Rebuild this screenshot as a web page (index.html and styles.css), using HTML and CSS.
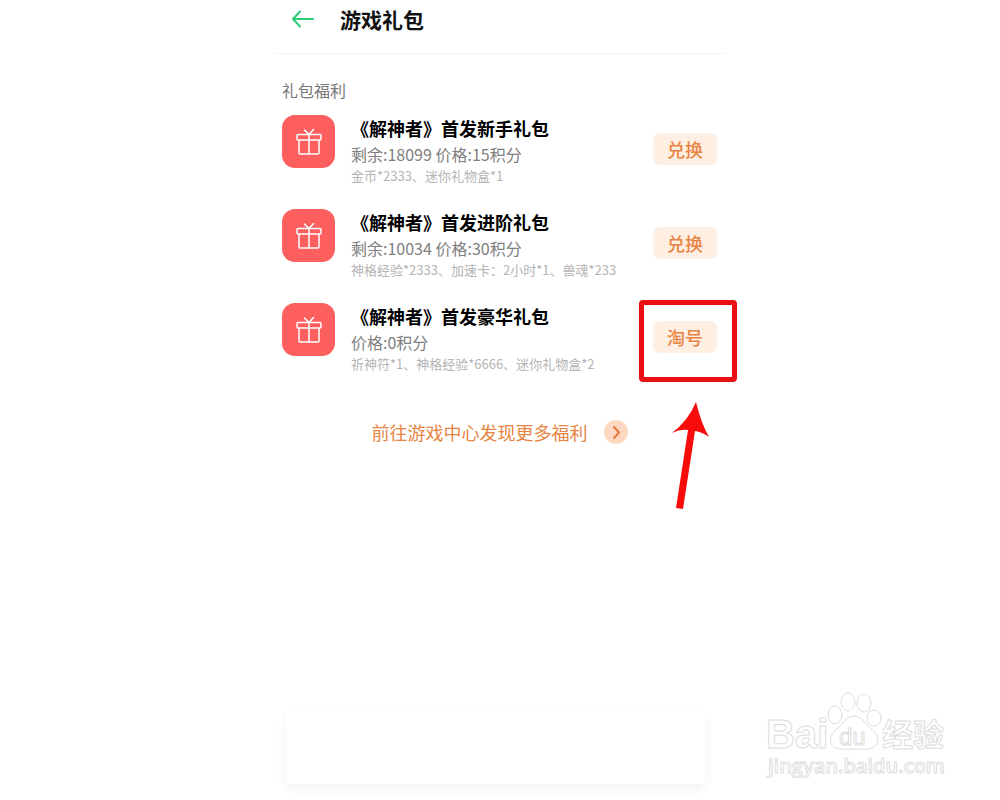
FILE: index.html
```html
<!DOCTYPE html>
<html lang="zh-CN">
<head>
    <meta charset="UTF-8">
    <meta name="viewport" content="width=device-width, initial-scale=1.0">
    <title>游戏礼包</title>
    <link rel="stylesheet" href="styles.css">
</head>
<body>
    <svg class="defs" width="0" height="0" aria-hidden="true">
        <symbol id="gift" viewBox="0 0 28 28">
            <path d="M3 6.500h22q1 0 1 1v3.500q0 1-1 1h-22q-1 0-1-1v-3.500q0-1 1-1zM4 12v13q0 1 1 1h18q1 0 1-1v-13M14 6.500v19.500M14 6.500L9.500 2M14 6.500L18.500 1.500"/>
        </symbol>
    </svg>
    <div class="container">
        <header class="header">
            <button class="back" aria-label="返回">
                <svg width="24" height="20" viewBox="0 0 24 20"><path d="M23 10H3M10 2.500L3 10l7 7.500"/></svg>
            </button>
            <h1>游戏礼包</h1>
        </header>
        <main class="content">
            <h2>礼包福利</h2>
            <ul class="gift_list">
                <li class="gift">
                    <span class="gift_icon"><svg width="28" height="28"><use href="#gift"/></svg></span>
                    <div class="info">
                        <h3>《解神者》首发新手礼包</h3>
                        <p class="price">剩余:18099 价格:15积分</p>
                        <p class="detail">金币*2333、迷你礼物盒*1</p>
                    </div>
                    <button class="btn">兑换</button>
                </li>
                <li class="gift">
                    <span class="gift_icon"><svg width="28" height="28"><use href="#gift"/></svg></span>
                    <div class="info">
                        <h3>《解神者》首发进阶礼包</h3>
                        <p class="price">剩余:10034 价格:30积分</p>
                        <p class="detail">神格经验*2333、加速卡：2小时*1、兽魂*233</p>
                    </div>
                    <button class="btn">兑换</button>
                </li>
                <li class="gift">
                    <span class="gift_icon"><svg width="28" height="28"><use href="#gift"/></svg></span>
                    <div class="info">
                        <h3>《解神者》首发豪华礼包</h3>
                        <p class="price">价格:0积分</p>
                        <p class="detail">祈神符*1、神格经验*6666、迷你礼物盒*2</p>
                    </div>
                    <div class="marked">
                        <button class="btn">淘号</button>
                        <span class="mark_box"></span>
                        <svg class="mark_arrow" width="38" height="108" viewBox="0 0 38 108"><path d="M24 0Q29 21 37 35Q30 30 23 29L11 107L4 106L16 28Q8 27 0 31Q16 19 24 0z"/></svg>
                    </div>
                </li>
            </ul>
            <a class="more" href="#">前往游戏中心发现更多福利
                <svg width="24" height="24" viewBox="0 0 24 24"><circle cx="12" cy="12" r="12"/><path d="M10 7l5 5.500l-5 5.500"/></svg>
            </a>
        </main>
        <div class="bottom_bar"></div>
    </div>
    <!-- 水印 -->
    <div class="watermark">
        <svg width="184" height="88" viewBox="0 0 184 88">
            <text class="brand" x="0" y="58">Bai</text>
            <path d="M88 26c-8 0-11 8-16 12c-6 5-9 9-7 15c3 8 12 6 23 6s20 2 23-6c2-6-1-10-7-15c-5-4-8-12-16-12z"/>
            <ellipse cx="69" cy="25" rx="7" ry="9"/>
            <ellipse cx="82" cy="12" rx="7" ry="9"/>
            <ellipse cx="98" cy="13" rx="7" ry="9"/>
            <ellipse cx="108" cy="28" rx="7" ry="8"/>
            <text class="du" x="73" y="55">du</text>
            <text class="name" x="116" y="56">经验</text>
            <text class="site" x="2" y="83">jingyan.baidu.com</text>
        </svg>
    </div>
</body>
</html>
```
FILE: styles.css
```css
* { box-sizing: border-box; }
body { margin: 0; background: #fff; font-family: "Noto Sans CJK SC", sans-serif; }
h1, h2, h3, p, ul { margin: 0; padding: 0; }
button { font-family: inherit; border: none; padding: 0; cursor: pointer; }
svg { display: block; fill: none; stroke-linecap: round; stroke-linejoin: round; }
.defs { position: absolute; }

.container { display: flex; flex-direction: column; max-width: 448px; min-height: 100vh; margin: 0 auto; padding-bottom: 16px; }
.header { display: flex; align-items: center; gap: 26px; padding: 0 14px 15px; border-bottom: 1px solid #f3f3f3; }
.header h1 { font-size: 21px; line-height: 38px; font-weight: 700; color: #111; }
.back { background: none; }
.back svg { stroke: #2fcb78; stroke-width: 2; }

.content { padding: 24px 7px 0 6px; }
.content h2 { font-size: 16px; line-height: 24px; font-weight: 400; color: #777; }
.gift_list { list-style: none; display: flex; flex-direction: column; gap: 25px; padding-top: 13px; }
.gift { display: flex; gap: 16px; align-items: flex-start; }
.gift_icon { display: flex; justify-content: center; align-items: center; width: 53px; height: 53px; border-radius: 13px; background: #fd5f5f; }
.gift_icon svg { stroke: #fff; stroke-width: 1.5; }
.info { flex: 1; }
.info h3 { font-size: 18px; line-height: 27px; font-weight: 700; color: #000; }
.price { font-size: 16px; line-height: 25px; color: #808080; }
.detail { font-size: 13px; line-height: 17px; color: #b4b4b4; }
.btn { width: 64px; height: 32px; margin-top: 18px; border-radius: 7px; background: #ffeee2; color: #e88443; font-size: 18px; line-height: 30px; font-weight: 500; }

/* 红框和箭头 */
.marked { position: relative; }
.mark_box { position: absolute; top: -3px; left: -14px; width: 98px; height: 82px; border: 5px solid #e90f15; border-radius: 4px; pointer-events: none; }
.mark_arrow { position: absolute; top: 99px; left: 19px; fill: #f80b0b; }

.more { display: flex; justify-content: center; align-items: center; gap: 16px; margin-top: 46px; font-size: 18px; line-height: 28px; color: #e88443; text-decoration: none; }
.more circle { fill: #fcd8c2; }
.more path { stroke: #e87840; stroke-width: 2; }

.bottom_bar { height: 74px; margin: auto 19px 0 10px; border-radius: 4px; background: #fff; box-shadow: 0 5px 12px rgba(0, 0, 0, .05); }

.watermark { position: absolute; right: 50px; top: 690px; pointer-events: none; }
.watermark svg { fill: #fff; stroke: #ddd; stroke-width: 1; }
.watermark text { font-family: "Liberation Sans", "Noto Sans CJK SC", sans-serif; }
.watermark .brand { font-size: 40px; font-weight: 700; }
.watermark .du { font-size: 24px; }
.watermark .name { font-family: "Noto Sans CJK SC", sans-serif; font-size: 31px; font-weight: 700; }
.watermark .site { font-family: "Open Sans", sans-serif; font-size: 20px; font-weight: 600; }
```
